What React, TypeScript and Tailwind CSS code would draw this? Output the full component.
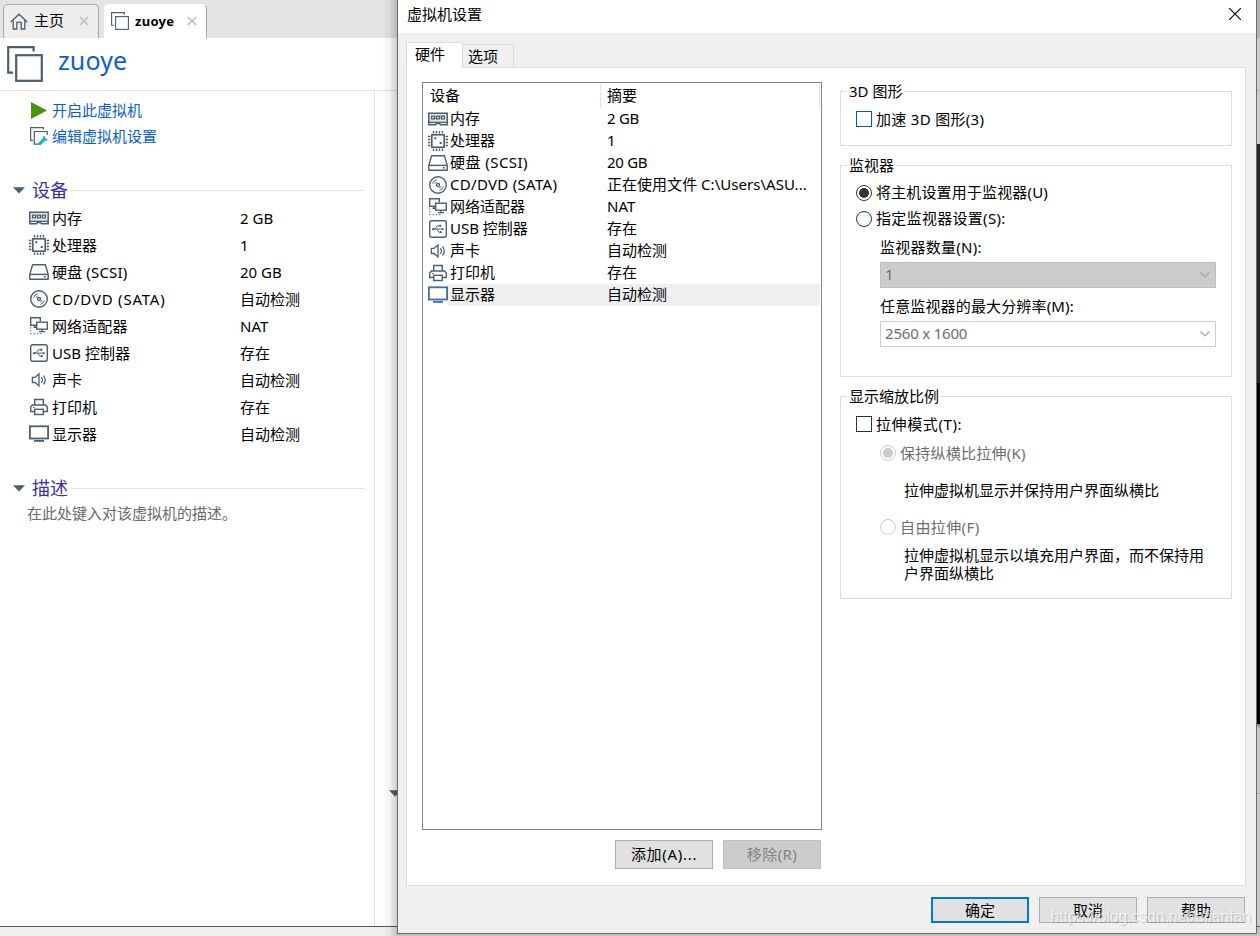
import React from "react";

const dark = "#4c5f6c";

type IconName = "memory" | "cpu" | "disk" | "cd" | "net" | "usb" | "sound" | "printer" | "display";

function DeviceIcon({ name, color = dark }: { name: IconName; color?: string }) {
  return (
    <svg width="20" height="20" viewBox="0 0 20 20" fill="none" stroke={color} strokeWidth="1.4" className="shrink-0">
      {name === "memory" && (
        <>
          <path d="M0.8 4.2H19.2V15.8H12.5L11.5 14.6H8.5L7.5 15.8H0.8Z" fill="#e4e8ea" strokeWidth="1.5" />
          <path d="M3.6 7.1h3v2.8h-3zM8.5 7.1h3v2.8h-3zM13.4 7.1h3v2.8h-3z" strokeWidth="1.3" />
          <path d="M1 13.3H19" strokeWidth="1.3" />
        </>
      )}
      {name === "cpu" && (
        <>
          <rect x="3.8" y="3.8" width="12.4" height="12.4" strokeWidth="1.6" fill="#fff" />
          <path d="M5.5 0v2.4M8.5 0v2.4M11.5 0v2.4M14.5 0v2.4M5.5 17.6v2.4M8.5 17.6v2.4M11.5 17.6v2.4M14.5 17.6v2.4M0 5.5h2.4M0 8.5h2.4M0 11.5h2.4M0 14.5h2.4M17.6 5.5h2.4M17.6 8.5h2.4M17.6 11.5h2.4M17.6 14.5h2.4" strokeWidth="1.4" />
          <path d="M6.3 6.3h2v2h-2zM11.7 11h2v2h-2z" fill={color} stroke="none" />
        </>
      )}
      {name === "disk" && (
        <>
          <path d="M0.8 12.4L3.6 2.8H16.4L19.2 12.4V17.2H0.8Z" strokeLinejoin="round" />
          <path d="M1 12.4H19" />
          <path d="M14.8 14.1h2v1.4h-2z" fill={color} stroke="none" />
        </>
      )}
      {name === "cd" && (
        <>
          <circle cx="10" cy="10" r="8.3" />
          <circle cx="10" cy="10" r="1.5" strokeWidth="1.3" />
          <path d="M4.6 8.6a5.6 5.6 0 0 1 4-4M6.9 8.8a3.4 3.4 0 0 1 1.9-1.9M15.4 11.4a5.6 5.6 0 0 1-4 4M13.1 11.2a3.4 3.4 0 0 1-1.9 1.9" strokeWidth="1" />
        </>
      )}
      {name === "net" && (
        <>
          <path d="M7 9.3H1.7V1.7H11.3V5.5" />
          <path d="M4.5 11.3H7M5.8 9.5v1.8" />
          <rect x="7.7" y="6.2" width="10.6" height="7" fill="#fff" />
          <path d="M13 13.2v2M10 15.6h6" />
          <path d="M1.7 11v1.6M1.7 14v1.6M1.2 17.6h1.6M4.4 17.6h1.8M7.6 17.6h1.8M11 17.6h1.6" strokeWidth="1.2" stroke="#84919a" />
        </>
      )}
      {name === "usb" && (
        <>
          <rect x="1.7" y="1.7" width="16.6" height="16.6" rx="2" />
          <path d="M4.5 10.1H15M7 10L9.4 6.7H12M8.7 10.2L10.8 13.2H13" strokeWidth="1" />
          <circle cx="5.2" cy="10.1" r="1.2" fill={color} stroke="none" />
          <path d="M11.4 5.8h1.9v1.9h-1.9zM12 12.2h1.9v1.9h-1.9zM14 8.7l2.4 1.4-2.4 1.4z" fill={color} stroke="none" />
        </>
      )}
      {name === "sound" && (
        <>
          <path d="M3.4 7.4H6L10 3.9V15.9L6 12.5H3.4Z" strokeWidth="1.3" />
          <path d="M12.2 7.2a4 4 0 0 1 0 5.6M14.4 5.6a6.2 6.2 0 0 1 0 8.8" strokeWidth="1.3" />
        </>
      )}
      {name === "printer" && (
        <>
          <path d="M5.7 8V2.5H14.3V8" />
          <path d="M5.5 14.5H1.7V10L3.5 8H16.5L18.3 10V14.5H14.5" />
          <rect x="5.7" y="12.3" width="8.6" height="5.2" />
          <path d="M4 10.5h1.6" strokeWidth="1.1" />
        </>
      )}
      {name === "display" && (
        <>
          <rect x="0.9" y="2.3" width="18.2" height="12.2" strokeWidth="1.8" fill="#fff" />
          <path d="M5 16.9h10" strokeWidth="1.8" />
        </>
      )}
    </svg>
  );
}

type Device = {
  icon: IconName;
  name: string;
  value: string;
  summary: string;
  panelClass?: string;
  listClass?: string;
  summaryClass?: string;
};

const devices: Device[] = [
  { icon: "memory", name: "内存", value: "2 GB", summary: "2 GB", summaryClass: "tracking-[-0.3px]" },
  { icon: "cpu", name: "处理器", value: "1", summary: "1" },
  { icon: "disk", name: "硬盘 (SCSI)", value: "20 GB", summary: "20 GB", panelClass: "tracking-[0.15px]", listClass: "tracking-[0.45px]", summaryClass: "tracking-[-0.3px]" },
  { icon: "cd", name: "CD/DVD (SATA)", value: "自动检测", summary: "正在使用文件 C:\\Users\\ASU...", panelClass: "tracking-[0.78px]", listClass: "tracking-[0.3px]", summaryClass: "tracking-[0.03px]" },
  { icon: "net", name: "网络适配器", value: "NAT", summary: "NAT", panelClass: "tracking-[0.1px]" },
  { icon: "usb", name: "USB 控制器", value: "存在", summary: "存在", panelClass: "tracking-[0.05px]" },
  { icon: "sound", name: "声卡", value: "自动检测", summary: "自动检测" },
  { icon: "printer", name: "打印机", value: "存在", summary: "存在" },
  { icon: "display", name: "显示器", value: "自动检测", summary: "自动检测" },
];

function Windows({ size, stroke }: { size: number; stroke: number }) {
  return (
    <svg width={size} height={size} viewBox="0 0 18 18" fill="none" stroke={dark} strokeWidth={stroke} className="shrink-0">
      <path d="M3 13.3H0.6V0.6H13.3V2.8" />
      <rect x="4.6" y="4.6" width="12.8" height="12.8" />
    </svg>
  );
}

function TabClose() {
  return (
    <svg width="10" height="10" viewBox="0 0 10 10" stroke="#c4c4c4" strokeWidth="1.9" className="-mt-[2px] shrink-0">
      <path d="M0.8 0.8L9.2 9.2M9.2 0.8L0.8 9.2" />
    </svg>
  );
}

function Caret() {
  return (
    <svg width="12" height="7" viewBox="0 0 12 7" className="shrink-0">
      <path d="M0 0.3H12L6 6.5Z" fill={dark} />
    </svg>
  );
}

function SectionTitle({ children }: { children: string }) {
  return (
    <div className="flex h-[26px] items-center pl-[13px] pr-[10px]">
      <Caret />
      <span className="ml-[7px] text-[18px] leading-[26px] text-[#3c2fa0]">{children}</span>
      <span className="ml-[3px] h-px flex-1 bg-[#e0e0e0]" />
    </div>
  );
}

function Radio({ checked, disabled }: { checked?: boolean; disabled?: boolean }) {
  return (
    <span className={"flex size-4 shrink-0 items-center justify-center rounded-full border bg-white " + (disabled ? "border-[#cccccc]" : "border-[#333333]")}>
      {checked && <span className={"size-[10px] rounded-full " + (disabled ? "bg-[#cccccc]" : "bg-[#333333]")} />}
    </span>
  );
}

function Group({ title, className, children }: { title: string; className: string; children: React.ReactNode }) {
  return (
    <fieldset className={"border border-[#dcdcdc] " + className}>
      <legend className="ml-[6px] h-[21px] px-[2px] leading-[20px]">{title}</legend>
      {children}
    </fieldset>
  );
}

function Select({ value, className }: { value: string; className: string }) {
  return (
    <div className={"ml-[39px] flex h-[26px] w-[336px] items-center justify-between border pl-[4px] pr-[5px] text-[#6d6d6d] " + className}>
      <span className="-mt-px tracking-[-0.2px]">{value}</span>
      <svg width="10" height="6" viewBox="0 0 10 6" fill="none" stroke="#a0a0a0" strokeWidth="1.1">
        <path d="M0.5 0.5L5 5L9.5 0.5" />
      </svg>
    </div>
  );
}

function Button({ children, className }: { children: string; className: string }) {
  return (
    <button className={"flex w-[98px] items-center justify-center " + className}>
      <span>{children}</span>
    </button>
  );
}

function MainWindow() {
  return (
    <div className="relative flex w-[397px] shrink-0 flex-col overflow-hidden bg-white">
      <div className="flex h-[38px] bg-[#e3e4e6] pl-[3px] pt-[4px]">
        <div className="flex w-[96px] items-center rounded-t-[5px] border border-b-0 border-[#a8a8a8] bg-[#ededee] pl-[6px]">
          <svg width="18" height="17" viewBox="0 0 18 17" fill="none" stroke={dark} strokeWidth="1.3" className="-mt-px shrink-0">
            <path d="M0.8 9L9 1.2L17.2 9" />
            <path d="M3.2 7.5V16H6.8V9.3H11.2V16H14.8V7.5" />
          </svg>
          <span className="-mt-[4px] ml-[6px] text-[15px] leading-5 text-black">主页</span>
          <span className="ml-[15px]"><TabClose /></span>
        </div>
        <div className="ml-[5px] flex w-[103px] items-center rounded-t-[5px] border border-b-0 border-l-0 border-t-white border-r-[#a8a8a8] bg-white pl-[7px]">
          <span className="-mt-[2px]"><Windows size={18} stroke={1.1} /></span>
          <span className="-mt-[2px] ml-[6px] text-[13px] font-bold leading-5 tracking-[0.3px] text-black">zuoye</span>
          <span className="ml-[13px]"><TabClose /></span>
        </div>
      </div>
      <div className="flex h-[53px] items-center border-b border-[#e0e0e0] pl-[7px]">
        <Windows size={36} stroke={1.1} />
        <span className="-mt-[8px] ml-[15px] text-[25px] leading-8 tracking-[0.1px] text-[#0b61c8]">zuoye</span>
      </div>
      <div className="flex flex-1">
        <div className="flex w-[375px] shrink-0 flex-col border-r border-[#e0e0e0]">
          <div className="mt-[6px] flex h-[26px] items-center pl-[31px] text-[15px] text-[#0b5fc5]">
            <svg width="16" height="17" viewBox="0 0 16 17"><path d="M0 0L16 8.5L0 17Z" fill="#46960f" /></svg>
            <span className="ml-[5px]">开启此虚拟机</span>
          </div>
          <div className="flex h-[26px] items-center pl-[30px] text-[15px] text-[#0b5fc5]">
            <svg width="18" height="18" viewBox="0 0 18 18" fill="none" stroke={dark} strokeWidth="1.2">
              <path d="M3 13.4H0.6V0.6H13.4V2.6" />
              <path d="M9 17.2H4.3V4.5H17.2V8" />
              <path d="M9 17.5L14 12.7" stroke="#0fb0dc" strokeWidth="3" />
              <path d="M14.3 9.2L13.5 12.8L17.3 12.4" stroke="#0fb0dc" strokeWidth="2" />
            </svg>
            <span className="ml-[4px]">编辑虚拟机设置</span>
          </div>
          <div className="mt-[28px]"><SectionTitle>设备</SectionTitle></div>
          <div className="mt-[2px] flex flex-col text-[15px] text-black">
            {devices.map((d) => (
              <div key={d.name} className="flex h-[27px] items-center pb-px pl-[29px]">
                <DeviceIcon name={d.icon} />
                <span className={"ml-[3px] w-[188px] " + (d.panelClass ?? "")}>{d.name}</span>
                <span>{d.value}</span>
              </div>
            ))}
          </div>
          <div className="mt-[27px]"><SectionTitle>描述</SectionTitle></div>
          <span className="ml-[27px] text-[15px] leading-[25px] text-[#6a6a6a]">在此处键入对该虚拟机的描述。</span>
        </div>
        <div className="flex items-start pl-[14px] pt-[699px]"><Caret /></div>
      </div>
      <div className="h-[10px] border-t border-[#555555] bg-[#f0f0f0]" />
      <div className="pointer-events-none absolute inset-y-0 right-0 w-[15px] bg-gradient-to-r from-transparent via-black/5 to-black/20" />
    </div>
  );
}

function DeviceList() {
  return (
    <div className="flex h-[748px] w-[400px] flex-col border border-[#828790] bg-white">
      <div className="flex h-[25px] pr-px pt-px leading-[23px]">
        <span className="h-6 w-[178px] border-r border-[#e2e2e2] pl-[7px]">设备</span>
        <span className="h-6 flex-1 border-r border-[#e2e2e2] pl-[6px]">摘要</span>
      </div>
      {devices.map((d) => (
        <div key={d.name} className="flex h-[22px] items-center pl-[5px] pr-px">
          <DeviceIcon name={d.icon} color={d.icon === "display" ? "#3f6f9d" : dark} />
          <div className={"flex h-full flex-1 items-center pl-[2px] " + (d.icon === "display" ? "bg-[#f0f0f0]" : "")}>
            <span className={"-mt-px w-[157px] whitespace-nowrap " + (d.listClass ?? "")}>{d.name}</span>
            <span className={"-mt-px whitespace-nowrap " + (d.summaryClass ?? "")}>{d.summary}</span>
          </div>
        </div>
      ))}
    </div>
  );
}

function Dialog() {
  return (
    <div className="relative flex h-[934px] w-[860px] shrink-0 flex-col border border-t-0 border-[#6b6b6b] bg-[#f0f0f0] text-[15px] text-black">
      <div className="flex h-[33px] items-center justify-between bg-white pl-[9px] pr-[15px]">
        <span className="-mt-[5px]">虚拟机设置</span>
        <svg width="12" height="12" viewBox="0 0 12 12" stroke="#000" strokeWidth="1.1" className="-mt-[5px]">
          <path d="M0 0L12 12M12 0L0 12" />
        </svg>
      </div>
      <div className="relative z-10 -mb-px flex h-[35px] items-end pl-[8px]">
        <div className="h-[26px] w-[57px] border border-b-0 border-[#dcdcdc] bg-white pl-[8px] leading-[22px]">硬件</div>
        <div className="h-[24px] w-[51px] border border-l-0 border-[#dcdcdc] bg-[#f0f0f0] pl-[5px] leading-[22px]">选项</div>
      </div>
      <div className="ml-[8px] flex h-[819px] w-[840px] border border-[#dcdcdc] bg-white pl-[15px] pt-[14px]">
        <div className="flex w-[400px] flex-col">
          <DeviceList />
          <div className="mt-[10px] flex justify-end gap-[10px] pr-px">
            <Button className="h-[29px] border border-[#adadad] bg-[#e1e1e1] pb-px tracking-[0.7px]">添加(A)...</Button>
            <Button className="h-[29px] border border-[#bfbfbf] bg-[#cccccc] pb-px tracking-[0.4px] text-[#838383]">移除(R)</Button>
          </div>
        </div>
        <div className="ml-[18px] flex w-[392px] flex-col gap-[9px] -mt-px">
          <Group title="3D 图形" className="h-[65px]">
            <div className="flex h-[34px] items-center pl-[15px]">
              <span className="size-4 border border-[#0060a8] bg-white" />
              <span className="ml-[4px] tracking-[0.3px]">加速 3D 图形(3)</span>
            </div>
          </Group>
          <Group title="监视器" className="h-[222px]">
            <div className="mt-[4px] flex h-[26px] items-center pl-[15px]">
              <Radio checked />
              <span className="-mt-px ml-[4px] tracking-[0.15px]">将主机设置用于监视器(U)</span>
            </div>
            <div className="flex h-[26px] items-center pl-[15px]">
              <Radio />
              <span className="-mt-px ml-[4px] tracking-[0.3px]">指定监视器设置(S):</span>
            </div>
            <div className="flex h-[30px] items-center pl-[39px] tracking-[0.25px]">监视器数量(N):</div>
            <Select value="1" className="border-[#bfbfbf] bg-[#cccccc]" />
            <div className="mt-[4px] flex h-[29px] items-center pb-px pl-[39px] tracking-[0.15px]">任意监视器的最大分辨率(M):</div>
            <Select value="2560 x 1600" className="border-[#cccccc] bg-white" />
          </Group>
          <Group title="显示缩放比例" className="h-[213px]">
            <div className="flex h-[34px] items-center pl-[15px]">
              <span className="size-4 border border-[#333333] bg-white" />
              <span className="ml-[4px] tracking-[0.6px]">拉伸模式(T):</span>
            </div>
            <div className="flex h-[24px] items-center pl-[39px] text-[#6d6d6d]">
              <Radio checked disabled />
              <span className="ml-[4px] tracking-[0.25px]">保持纵横比拉伸(K)</span>
            </div>
            <div className="mt-[15px] pl-[63px] leading-[20px]">拉伸虚拟机显示并保持用户界面纵横比</div>
            <div className="mt-[15px] flex h-[24px] items-center pl-[39px] text-[#6d6d6d]">
              <Radio disabled />
              <span className="ml-[4px] tracking-[0.4px]">自由拉伸(F)</span>
            </div>
            <div className="mt-[7px] w-[372px] pl-[63px] leading-[18px]">拉伸虚拟机显示以填充用户界面，而不保持用户界面纵横比</div>
          </Group>
        </div>
      </div>
      <div className="mt-[11px] flex justify-end gap-[10px] pr-[11px]">
        <Button className="h-[26px] border-2 border-[#0078d7] bg-[#e1e1e1]">确定</Button>
        <Button className="h-[26px] border border-[#adadad] bg-[#e1e1e1]">取消</Button>
        <Button className="h-[26px] border border-[#adadad] bg-[#e1e1e1]">帮助</Button>
      </div>
      <span className="pointer-events-none absolute bottom-[6px] right-[5px] whitespace-nowrap font-['Liberation_Sans'] text-[15.7px] leading-5 text-white/70 [text-shadow:1px_1px_1px_rgba(0,0,0,0.18)]">
        https://blog.csdn.net/bfianfan
      </span>
    </div>
  );
}

export default function App() {
  return (
    <div className="flex h-[936px] w-[1260px] overflow-hidden bg-[#c0c3c0] font-['Noto_Sans','Noto_Sans_CJK_SC',sans-serif]">
      <MainWindow />
      <Dialog />
      <div className="flex flex-1 flex-col">
        <div className="h-[38px] bg-[#b4b3b3]" />
        <div className="h-[52px] bg-[#cfcecd]" />
        <div className="h-px bg-[#b8b8b8]" />
        <div className="h-[53px] bg-[#cfcecd]" />
        <div className="h-[239px] bg-[#262728]" />
        <div className="h-[341px] bg-black" />
        <div className="h-[4px] bg-gradient-to-b from-[#777777] to-[#c4c4c4]" />
        <div className="h-[65px] bg-[#cbcbcb]" />
        <div className="h-px bg-[#b0b0b0]" />
        <div className="h-[132px] bg-[#cbcbcb]" />
        <div className="h-px bg-[#555555]" />
      </div>
    </div>
  );
}
